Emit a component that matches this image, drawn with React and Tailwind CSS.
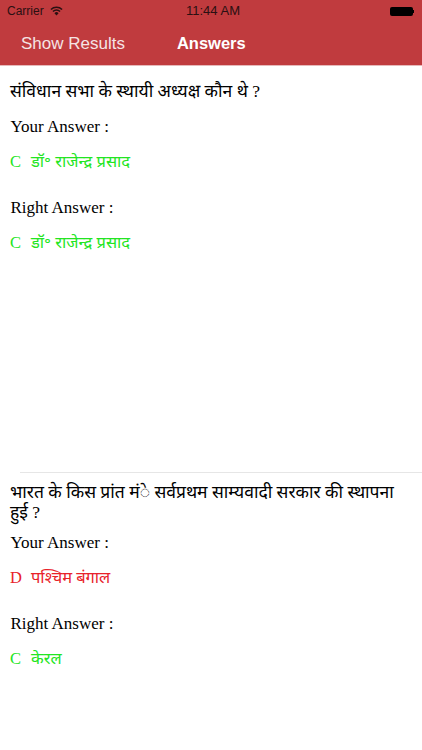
const serif = { fontFamily: '"Liberation Serif", "Noto Sans", serif' };

function WifiIcon() {
  return (
    <svg viewBox="0 0 14 10" className="ml-[6px] h-[10px] w-[13px]" fill="none" stroke="currentColor" strokeWidth="1.7">
      <path d="M1 3.4a8.6 8.6 0 0 1 12 0" />
      <path d="M3.2 5.6a5.4 5.4 0 0 1 7.6 0" />
      <path d="M4.8 7.3a3 3 0 0 1 4.4 0L7 9.8z" fill="currentColor" stroke="none" />
    </svg>
  );
}

function Answer({ label, letter, text, color, gap }) {
  return (
    <div className={gap}>
      <p className="pl-[0.5px] text-[17px] leading-[22px] text-black">{label}</p>
      <p className={`mt-[13px] flex text-[16.5px] leading-[22px] ${color}`}>
        <span className="w-[21px] shrink-0">{letter}</span>
        <span>{text}</span>
      </p>
    </div>
  );
}

function Question({ title, className, children }) {
  return (
    <section className={`px-[10px] ${className}`}>
      <h2 className="text-[17.5px] leading-[20px] text-black">{title}</h2>
      {children}
    </section>
  );
}

export default function App() {
  return (
    <div className="h-[750px] w-[422px] overflow-hidden bg-white" style={serif}>
      <header className="h-[65px] bg-[#c03b3e] font-['Liberation_Sans',sans-serif]">
        <div className="relative flex h-[22px] items-center px-[7px] text-[12px] text-[#2a1012]">
          <span>Carrier</span>
          <WifiIcon />
          <span className="absolute left-[186px] text-[13px] font-medium">11:44 AM</span>
          <div className="ml-auto mr-[1px] flex items-center">
            <div className="h-[9px] w-[23px] rounded-[2px] bg-black" />
            <div className="h-[3px] w-[1px] bg-black" />
          </div>
        </div>
        <nav className="flex h-[43px] items-center text-white">
          <span className="ml-[21px] text-[17px] text-[#f5e4e4]">Show Results</span>
          <span className="ml-[52px] text-[16.5px] font-bold">Answers</span>
        </nav>
      </header>
      <div className="h-px bg-[#e6b9ba]" />
      <Question title="संविधान सभा के स्थायी अध्यक्ष कौन थे ?" className="h-[406px] pt-[15px]">
        <div className="pt-[15px]">
          <Answer label="Your Answer :" letter="C" text="डॉ॰ राजेन्द्र प्रसाद" color="text-[#22e522]" />
          <Answer label="Right Answer :" letter="C" text="डॉ॰ राजेन्द्र प्रसाद" color="text-[#22e522]" gap="mt-[24px]" />
        </div>
      </Question>
      <div className="ml-[20px] h-px bg-[#e6e6e6]" />
      <Question title="भारत के किस प्रांत मंे सर्वप्रथम साम्यवादी सरकार की स्थापना हुई ?" className="pt-[9px]">
        <div className="pt-[10px]">
          <Answer label="Your Answer :" letter="D" text="पश्चिम बंगाल" color="text-[#e8222a]" />
          <Answer label="Right Answer :" letter="C" text="केरल" color="text-[#22e522]" gap="mt-[24px]" />
        </div>
      </Question>
    </div>
  );
}
